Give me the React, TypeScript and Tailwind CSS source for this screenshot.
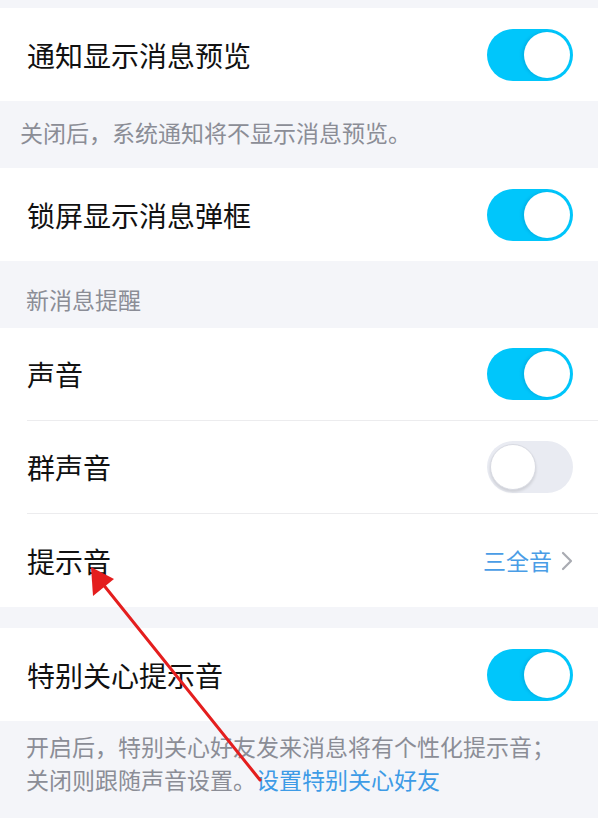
import React, { FC } from "react";

const FONT = { fontFamily: '"Noto Sans CJK SC", "Noto Sans", sans-serif' };

const Toggle: FC<{ on: boolean }> = ({ on }) => (
  <div
    className={`relative w-[86px] h-[52px] rounded-full ${
      on ? "bg-[#00c6fb]" : "bg-[#e9ebf2]"
    }`}
  >
    <div
      className={`absolute top-[3px] w-[46px] h-[46px] rounded-full bg-white ${
        on
          ? "right-[3px] shadow-[-2px_0_3px_rgba(0,120,170,0.25)]"
          : "left-[3px] border border-[#d8dae2] shadow-[0_2px_3px_rgba(0,0,0,0.12)]"
      }`}
    />
  </div>
);

const Row: FC<{ label: string; divider?: boolean; children: React.ReactNode }> = ({
  label,
  divider,
  children,
}) => (
  <div className="bg-white pl-[27px]">
    <div
      className={`h-[93px] flex items-center justify-between pr-[25px] ${
        divider ? "border-b border-[#ececee]" : ""
      }`}
    >
      <span className="text-[28px] text-[#111111]">{label}</span>
      {children}
    </div>
  </div>
);

const App: FC = () => {
  return (
    <div className="relative w-[598px] h-[818px] overflow-hidden bg-[#f4f5f9]" style={FONT}>
      <div className="h-[8px]" />
      <Row label="通知显示消息预览">
        <Toggle on />
      </Row>
      <div className="h-[67px] pt-[17px] px-[20px] text-[23px] leading-[28px] text-[#8b8d96]">
        关闭后，系统通知将不显示消息预览。
      </div>
      <Row label="锁屏显示消息弹框">
        <Toggle on />
      </Row>
      <div className="h-[67px] pt-[24px] px-[26px] text-[23px] leading-[28px] text-[#8b8d96]">
        新消息提醒
      </div>
      <Row label="声音" divider>
        <Toggle on />
      </Row>
      <Row label="群声音" divider>
        <Toggle on={false} />
      </Row>
      <Row label="提示音">
        <div className="flex items-center gap-[9px]">
          <span className="text-[23px] text-[#4a9de6]">三全音</span>
          <svg width="12" height="20" viewBox="0 0 12 20" fill="none">
            <path d="M2 2l8 8-8 8" stroke="#a9abb2" strokeWidth="2.2" strokeLinecap="round" strokeLinejoin="round" />
          </svg>
        </div>
      </Row>
      <div className="h-[21px]" />
      <Row label="特别关心提示音">
        <Toggle on />
      </Row>
      <div className="pt-[9px] px-[26px] text-[23px] leading-[33px] text-[#8b8d96]">
        <div>开启后，特别关心好友发来消息将有个性化提示音；</div>
        <div>
          关闭则跟随声音设置。<span className="text-[#3d9be6]">设置特别关心好友</span>
        </div>
      </div>

      {/* annotation arrow */}
      <svg className="absolute left-0 top-0 pointer-events-none" width="598" height="818" viewBox="0 0 598 818">
        <line x1="260" y1="780" x2="102" y2="583" stroke="#e41e1e" strokeWidth="3" strokeLinecap="round" />
        <polygon points="91,567 114,579 93,596" fill="#e41e1e" />
      </svg>
    </div>
  );
};

export default App;
